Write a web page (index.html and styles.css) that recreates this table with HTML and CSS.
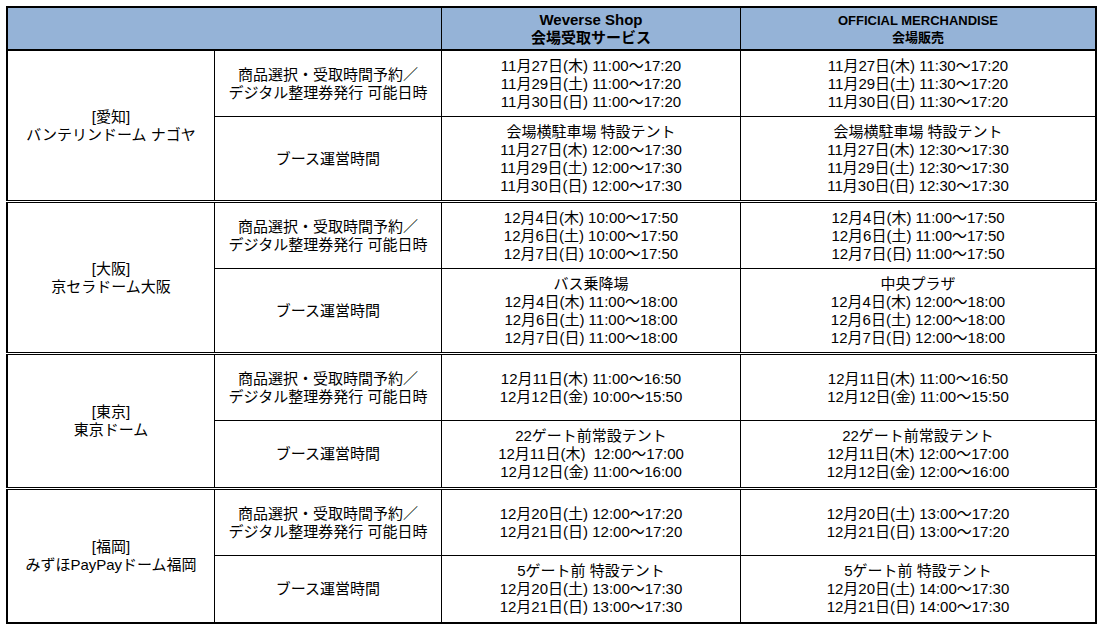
FILE: index.html
```html
<!DOCTYPE html>
<html lang="ja">
<head>
<meta charset="utf-8">
<title>会場受取・会場販売 日程</title>
<link rel="stylesheet" href="styles.css">
</head>
<body>
<div class="sheet">
  <div class="head">
    <div class="hcell hblank"></div>
    <div class="hcell hweverse">Weverse Shop<br>会場受取サービス</div>
    <div class="hcell hofficial">OFFICIAL MERCHANDISE<br>会場販売</div>
  </div>

  <div class="group first">
    <div class="venue">[愛知]<br>バンテリンドーム ナゴヤ</div>
    <div class="label top">商品選択・受取時間予約／<br>デジタル整理券発行 可能日時</div>
    <div class="cell top">11月27日(木) 11:00〜17:20<br>11月29日(土) 11:00〜17:20<br>11月30日(日) 11:00〜17:20</div>
    <div class="cell top last">11月27日(木) 11:30〜17:20<br>11月29日(土) 11:30〜17:20<br>11月30日(日) 11:30〜17:20</div>
    <div class="label">ブース運営時間</div>
    <div class="cell">会場横駐車場 特設テント<br>11月27日(木) 12:00〜17:30<br>11月29日(土) 12:00〜17:30<br>11月30日(日) 12:00〜17:30</div>
    <div class="cell last">会場横駐車場 特設テント<br>11月27日(木) 12:30〜17:30<br>11月29日(土) 12:30〜17:30<br>11月30日(日) 12:30〜17:30</div>
  </div>

  <div class="group">
    <div class="venue">[大阪]<br>京セラドーム大阪</div>
    <div class="label top">商品選択・受取時間予約／<br>デジタル整理券発行 可能日時</div>
    <div class="cell top">12月4日(木) 10:00〜17:50<br>12月6日(土) 10:00〜17:50<br>12月7日(日) 10:00〜17:50</div>
    <div class="cell top last">12月4日(木) 11:00〜17:50<br>12月6日(土) 11:00〜17:50<br>12月7日(日) 11:00〜17:50</div>
    <div class="label">ブース運営時間</div>
    <div class="cell">バス乗降場<br>12月4日(木) 11:00〜18:00<br>12月6日(土) 11:00〜18:00<br>12月7日(日) 11:00〜18:00</div>
    <div class="cell last">中央プラザ<br>12月4日(木) 12:00〜18:00<br>12月6日(土) 12:00〜18:00<br>12月7日(日) 12:00〜18:00</div>
  </div>

  <div class="group">
    <div class="venue">[東京]<br>東京ドーム</div>
    <div class="label top">商品選択・受取時間予約／<br>デジタル整理券発行 可能日時</div>
    <div class="cell top">12月11日(木) 11:00〜16:50<br>12月12日(金) 10:00〜15:50</div>
    <div class="cell top last">12月11日(木) 11:00〜16:50<br>12月12日(金) 11:00〜15:50</div>
    <div class="label">ブース運営時間</div>
    <div class="cell">22ゲート前常設テント<br>12月11日(木)&nbsp; 12:00〜17:00<br>12月12日(金) 11:00〜16:00</div>
    <div class="cell last">22ゲート前常設テント<br>12月11日(木) 12:00〜17:00<br>12月12日(金) 12:00〜16:00</div>
  </div>

  <div class="group final">
    <div class="venue">[福岡]<br>みずほPayPayドーム福岡</div>
    <div class="label top">商品選択・受取時間予約／<br>デジタル整理券発行 可能日時</div>
    <div class="cell top">12月20日(土) 12:00〜17:20<br>12月21日(日) 12:00〜17:20</div>
    <div class="cell top last">12月20日(土) 13:00〜17:20<br>12月21日(日) 13:00〜17:20</div>
    <div class="label">ブース運営時間</div>
    <div class="cell">5ゲート前 特設テント<br>12月20日(土) 13:00〜17:30<br>12月21日(日) 13:00〜17:30</div>
    <div class="cell last">5ゲート前 特設テント<br>12月20日(土) 14:00〜17:30<br>12月21日(日) 14:00〜17:30</div>
  </div>
</div>
</body>
</html>
```
FILE: styles.css
```css
* {
  box-sizing: border-box;
}

html, body {
  margin: 0;
  padding: 0;
  background: #ffffff;
}

body {
  font-family: "Liberation Sans", "Noto Sans CJK JP", sans-serif;
  font-size: 15px;
  line-height: 18px;
  color: #000000;
}

.sheet {
  width: 1091px;
  margin: 6px 0 0 6px;
}

.head {
  display: grid;
  grid-template-columns: 434px 299px 354px;
  border: 2px solid #000;
  background: #95b3d7;
}

.hcell {
  height: 41px;
  display: flex;
  align-items: center;
  justify-content: center;
  text-align: center;
  font-weight: bold;
}

.hblank,
.hweverse {
  border-right: 1px solid #000;
}

.hofficial {
  font-size: 13px;
  line-height: 17px;
}

.group {
  display: grid;
  grid-template-columns: 207px 227px 299px 354px;
  grid-template-rows: auto auto;
  border-left: 2px solid #000;
  border-right: 2px solid #000;
  border-top: 1px solid #000;
  border-bottom: 1px solid #000;
  margin-top: 1px;
}

.group.first {
  border-top: 0;
  margin-top: 0;
}

.group.final {
  border-bottom: 2px solid #000;
}

.venue {
  grid-row: span 2;
  border-right: 1px solid #000;
  display: flex;
  align-items: center;
  justify-content: center;
  text-align: center;
}

.label,
.cell {
  display: flex;
  align-items: center;
  justify-content: center;
  text-align: center;
  border-right: 1px solid #000;
  padding: 5.5px 4px;
  min-height: 66px;
}

.cell.last {
  border-right: 0;
}

.top {
  border-bottom: 1px solid #000;
  min-height: 66px;
}
```
